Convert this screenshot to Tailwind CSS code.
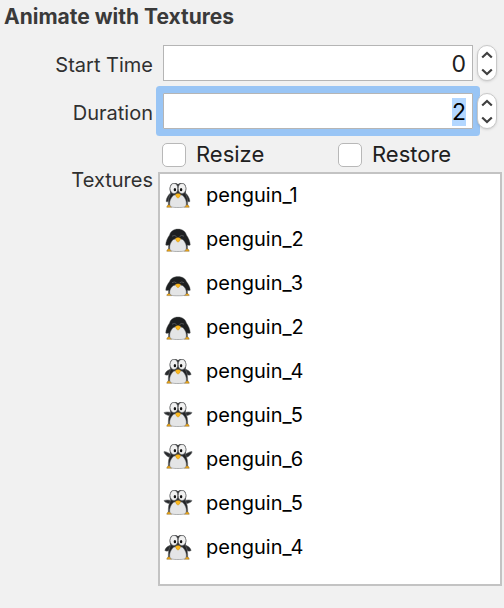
<!DOCTYPE html>
<html lang="en">
<head>
<meta charset="utf-8">
<meta name="viewport" content="width=device-width, initial-scale=1">
<title>Animate with Textures</title>
<script src="https://cdn.jsdelivr.net/npm/@tailwindcss/browser@4"></script>
</head>
<body class="bg-[#f1f1f1] font-['Inter','Noto_Sans',sans-serif] text-[#303030]">
<svg class="hidden" aria-hidden="true">
  <defs>
    <g id="belly">
      <path d="M2.800 26.300c0-1.800 1.500-2.800 3.200-2.500l1.700 2.500zM25.200 26.300c0-1.800-1.500-2.800-3.200-2.500l-1.700 2.500z" fill="#efa716" stroke="#6b5220" stroke-width=".4"/>
      <path d="M9.500 14.500C6.500 17 5 21.500 6 24.500c.8 1.700 3 2 8 2s7.200-.3 8-2c1-3-.5-7.500-3.500-10-2-1.200-7-1.200-9 0z" fill="#e4e5e6" stroke="#6c6e70" stroke-width=".5"/>
    </g>
    <g id="body">
      <path d="M7.500 9C7 13 4.300 16 4.300 21v4.500h19.400V21c0-5-2.700-8-3.200-12z" fill="#222427" stroke="#77797b" stroke-width=".5"/>
      <use href="#belly"/>
    </g>
    <path id="beak" d="M11.300 13.400Q14 11.400 16.700 13.400 16.500 15.600 14 17.300 11.500 15.600 11.300 13.400z" fill="#fbb81e" stroke="#a8761a" stroke-width=".3"/>
    <g id="eyes">
      <path d="M6.500 12C4.500 7 6 2 10.500 2c1.500 0 2.700.5 3.500 1.300C14.800 2.500 16 2 17.500 2 22 2 23.500 7 21.500 12l-4 2h-7z" fill="#3a3c3e"/>
      <ellipse cx="10" cy="7.500" rx="3.900" ry="5" fill="#f1f1f1" stroke="#66686a" stroke-width=".5"/>
      <ellipse cx="18" cy="7.500" rx="3.900" ry="5" fill="#f1f1f1" stroke="#66686a" stroke-width=".5"/>
      <ellipse cx="10.900" cy="8.700" rx="1.200" ry="1.600" fill="#111"/>
      <ellipse cx="17.100" cy="8.700" rx="1.200" ry="1.600" fill="#111"/>
      <path d="M14 3.500v9" stroke="#222" stroke-width=".5"/>
    </g>
    <g id="open-low">
      <path d="M7.500 11C5 13 2.200 16.500 2 20.500c1 .8 2.700.3 4.200-1.500L10 14zM20.500 11c2.500 2 5.300 5.500 5.500 9.500-1 .8-2.700.3-4.200-1.500L18 14z" fill="#292b2e" stroke="#6c6e70" stroke-width=".4"/>
      <use href="#body"/><use href="#eyes"/><use href="#beak"/>
    </g>
    <g id="open-half">
      <path d="M8 11.500C5 12.500 1.500 14 .8 17.500c1.500 1.200 4 .7 6-.5L10 14zM20 11.500c3 1 6.500 2.500 7.200 6-1.500 1.200-4 .7-6-.5L18 14z" fill="#292b2e" stroke="#6c6e70" stroke-width=".4"/>
      <use href="#body"/><use href="#eyes"/><use href="#beak"/>
    </g>
    <g id="open-level">
      <path d="M9 13C6 12 3 11.500 0 12.500c.2 1.700 3 2.500 6 3.500L9 18zM19 13c3-1 6-1.500 9-.5-.2 1.700-3 2.500-6 3.500L19 18z" fill="#292b2e" stroke="#6c6e70" stroke-width=".6"/>
      <use href="#body"/><use href="#eyes"/><use href="#beak"/>
    </g>
    <g id="open-high">
      <path d="M9 13C6 12 3 9.500 0 9.500c-.2 2 2 4.300 5.500 6L9 18zM19 13c3-1 6-3.500 9-3.500.2 2-2 4.300-5.500 6L19 18z" fill="#292b2e" stroke="#6c6e70" stroke-width=".6"/>
      <use href="#body"/><use href="#eyes"/><use href="#beak"/>
    </g>
    <g id="closed">
      <path d="M14 4C9.500 4 6.500 6.500 5.500 10 3.500 13 1.700 16.500 1.700 20c.8.700 1.800.5 2.800 0v5.500h19V20c1 .5 2 .7 2.800 0 0-3.500-1.800-7-3.800-10C21.500 6.500 18.500 4 14 4z" fill="#1d1f21" stroke="#6c6e70" stroke-width=".4"/>
      <use href="#belly"/>
      <path d="M9 14.700C10.500 12.500 17.500 12.500 19 14.700L17 14h-6z" fill="#1d1f21"/>
      <path d="M8 11.200q2.500-1.700 4.500.3M15.500 11.500q2-2 4.500-.3" fill="none" stroke="#66686a" stroke-width=".7"/>
      <use href="#beak"/>
    </g>
  </defs>
</svg>
<main class="pr-0.5">
  <h1 class="h-[45px] pl-1 pt-1 text-[21px] leading-[26px] font-bold text-[#3a3a3a]">Animate with Textures</h1>
  <form class="grid grid-cols-[153px_minmax(0,1fr)] gap-x-[5px]">
    <label for="start" class="pt-1.5 text-right text-[20px] leading-7">Start Time</label>
    <div class="mb-3 flex gap-1 pl-[5px] pr-[5px]">
      <input id="start" type="text" inputmode="numeric" value="0" class="h-9 min-w-0 flex-1 border border-[#b5b5b5] bg-white px-1.5 pt-0.5 text-right text-[23px] leading-7 text-[#202020] outline-none">
      <div class="flex h-9 w-5 shrink-0 flex-col overflow-hidden rounded-full border border-[#c9c9c9] bg-white shadow-sm">
        <button type="button" aria-label="Increase start time" class="flex flex-1 items-center justify-center"><svg class="size-3" viewBox="0 0 12 12" fill="none" stroke="#404040" stroke-width="2.200"><path d="M1.200 8.500 6 4l4.800 4.500"/></svg></button>
        <button type="button" aria-label="Decrease start time" class="flex flex-1 items-center justify-center"><svg class="size-3" viewBox="0 0 12 12" fill="none" stroke="#404040" stroke-width="2.200"><path d="M1.200 3.500 6 8l4.800-4.500"/></svg></button>
      </div>
    </div>
    <label for="duration" class="pt-1.5 text-right text-[20px] leading-7">Duration</label>
    <div class="mb-3 flex gap-1 pl-[5px] pr-[5px]">
      <input id="duration" type="text" inputmode="numeric" value="2" class="h-9 min-w-0 flex-1 rounded-[1px] border border-[#b5b5b5] bg-white px-1.5 pt-0.5 text-right text-[23px] leading-7 text-black shadow-[0_0_0_7px_#99c5f5] outline-none selection:bg-[#b3d7ff] selection:text-black">
      <div class="relative flex h-9 w-5 shrink-0 flex-col overflow-hidden rounded-full border border-[#c9c9c9] bg-white shadow-sm">
        <button type="button" aria-label="Increase duration" class="flex flex-1 items-center justify-center"><svg class="size-3" viewBox="0 0 12 12" fill="none" stroke="#404040" stroke-width="2.200"><path d="M1.200 8.500 6 4l4.800 4.500"/></svg></button>
        <button type="button" aria-label="Decrease duration" class="flex flex-1 items-center justify-center"><svg class="size-3" viewBox="0 0 12 12" fill="none" stroke="#404040" stroke-width="2.200"><path d="M1.200 3.500 6 8l4.800-4.500"/></svg></button>
      </div>
    </div>
    <div class="col-start-2 mb-1 grid h-[27px] grid-cols-[176px_1fr] pl-1 text-[22px] leading-[27px] text-[#202020]">
      <label class="flex items-center gap-2.5"><input type="checkbox" class="size-6 appearance-none rounded-[5px] border border-[#b8b8b8] bg-white">Resize</label>
      <label class="flex items-center gap-2.5"><input type="checkbox" class="size-6 appearance-none rounded-[5px] border border-[#b8b8b8] bg-white">Restore</label>
    </div>
    <div id="textures" class="-mt-1.5 text-right text-[20px] leading-7">Textures</div>
    <ul aria-labelledby="textures" class="border-2 border-[#c3c3c3] bg-white pb-3.5 text-[20px] leading-7 text-black">
      <li class="flex h-11 items-start gap-3.5 pl-1 pt-[7px]"><svg class="size-7 overflow-visible" viewBox="0 0 28 28"><use href="#open-low"/></svg>penguin_1</li>
      <li class="flex h-11 items-start gap-3.5 pl-1 pt-[7px]"><svg class="size-7" viewBox="0 0 28 28"><use href="#closed"/></svg>penguin_2</li>
      <li class="flex h-11 items-start gap-3.5 pl-1 pt-[7px]"><svg class="size-7" viewBox="0 0 28 28"><use href="#closed" transform="translate(0 4) scale(1 .86)"/></svg>penguin_3</li>
      <li class="flex h-11 items-start gap-3.5 pl-1 pt-[7px]"><svg class="size-7" viewBox="0 0 28 28"><use href="#closed"/></svg>penguin_2</li>
      <li class="flex h-11 items-start gap-3.5 pl-1 pt-[7px]"><svg class="size-7" viewBox="0 0 28 28"><use href="#open-half"/></svg>penguin_4</li>
      <li class="flex h-11 items-start gap-3.5 pl-1 pt-[7px]"><svg class="size-7 overflow-visible" viewBox="0 1 28 28"><use href="#open-level"/></svg>penguin_5</li>
      <li class="flex h-11 items-start gap-3.5 pl-1 pt-[7px]"><svg class="size-7 overflow-visible" viewBox="0 3 28 28"><use href="#open-high"/></svg>penguin_6</li>
      <li class="flex h-11 items-start gap-3.5 pl-1 pt-[7px]"><svg class="size-7 overflow-visible" viewBox="0 1 28 28"><use href="#open-level"/></svg>penguin_5</li>
      <li class="flex h-11 items-start gap-3.5 pl-1 pt-[7px]"><svg class="size-7" viewBox="0 0 28 28"><use href="#open-half"/></svg>penguin_4</li>
    </ul>
  </form>
</main>
<script>
  const duration = document.getElementById('duration');
  duration.focus();
  duration.select();
  document.querySelectorAll('button').forEach((button) => button.addEventListener('click', () => {
    const field = button.parentElement.previousElementSibling;
    const step = button === button.parentElement.firstElementChild ? 1 : -1;
    field.value = Math.max(0, Number(field.value) + step);
  }));
</script>
</body>
</html>
